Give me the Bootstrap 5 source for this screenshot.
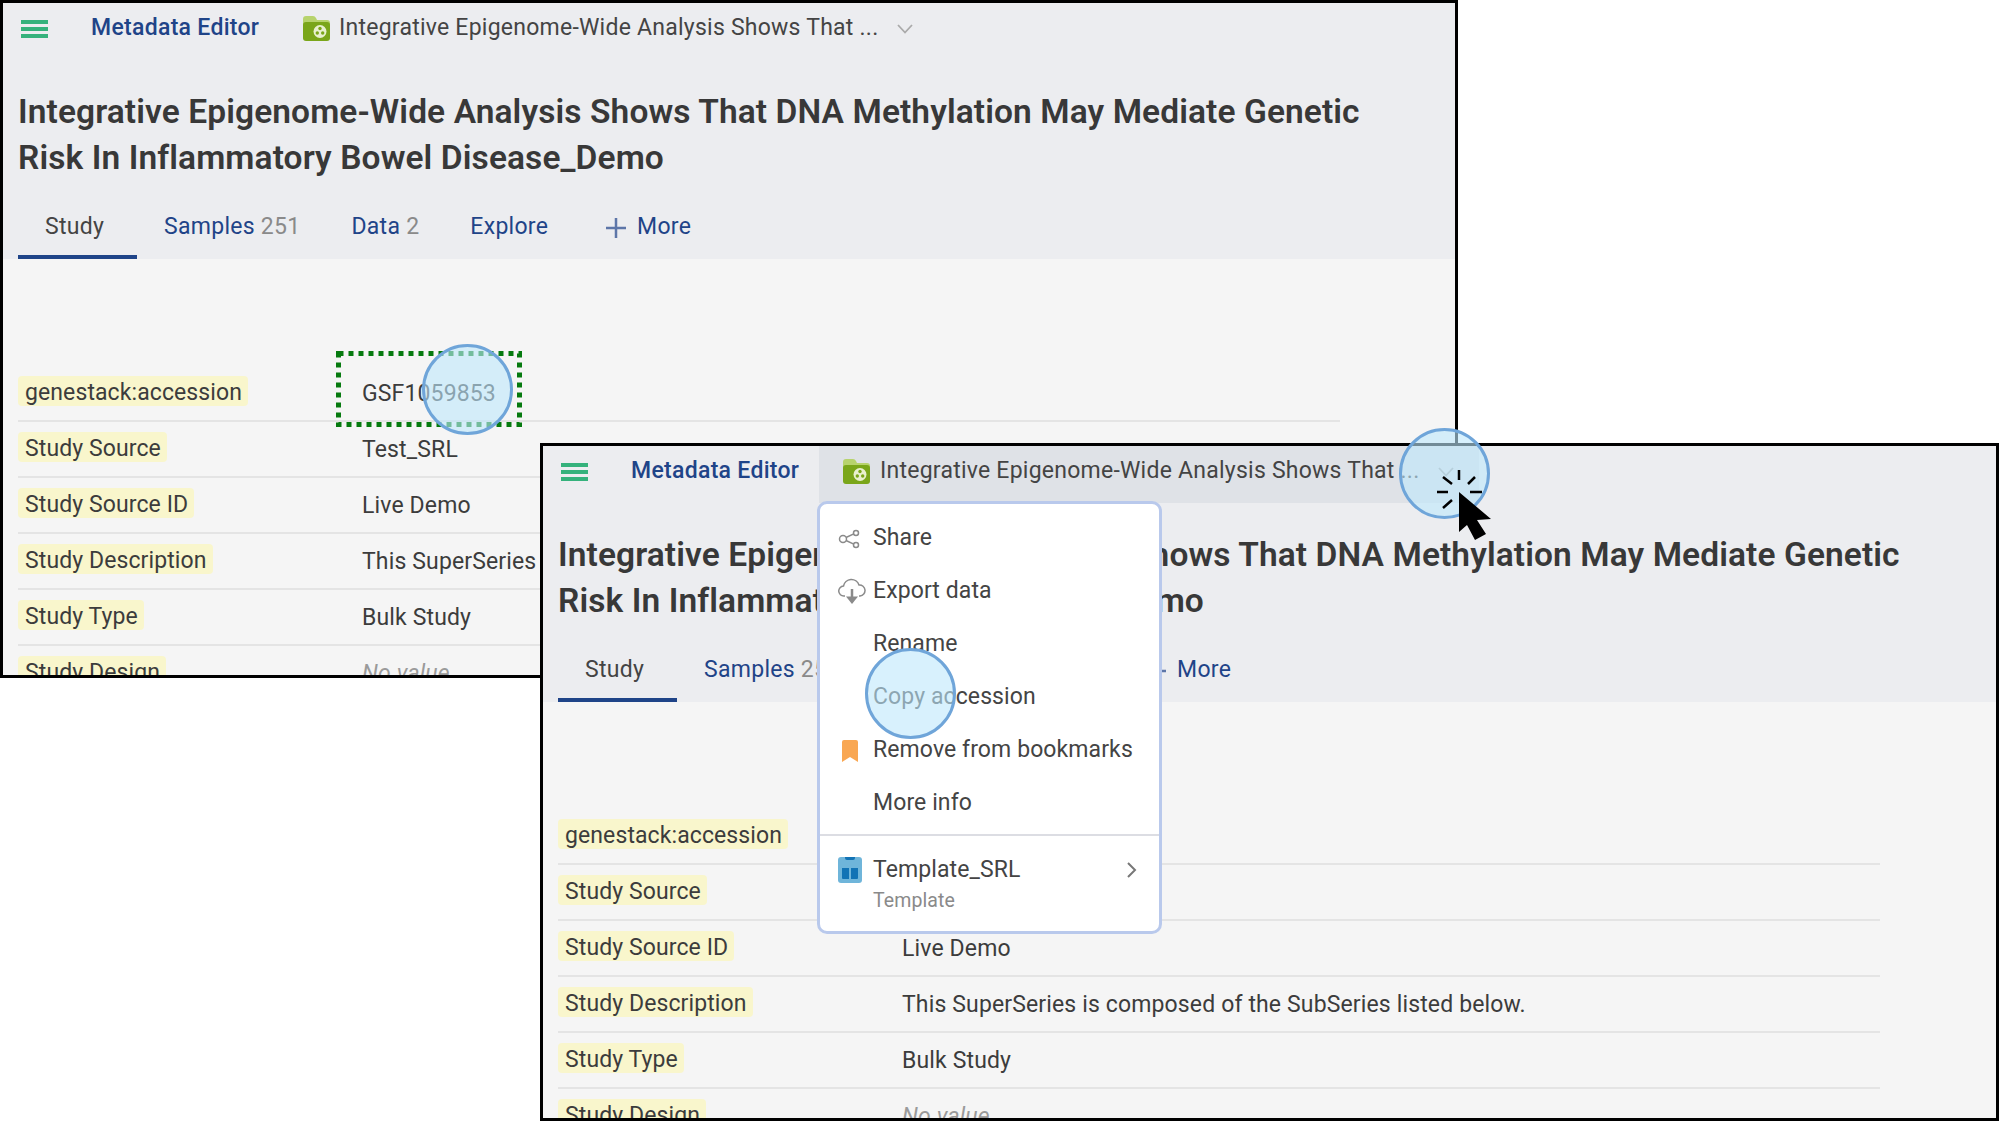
<!DOCTYPE html>
<html lang="en">
<head>
    <meta charset="UTF-8">
    <title>Metadata Editor</title>
    <link href="https://cdn.jsdelivr.net/npm/bootstrap@5.3.0/dist/css/bootstrap.min.css" rel="stylesheet">
    <style>
        body { background: #fff; font-family: "Roboto", "Liberation Sans", sans-serif; font-size: 23px; color: #3c3c3c; overflow: hidden; }
        .canvas { position: relative; width: 1999px; height: 1121px; overflow: hidden; }

        .app-win { position: absolute; width: 1458px; height: 678px; background: #f5f5f5; border: 3px solid #000; overflow: hidden; }
        .win-back { left: 0; top: 0; }
        .win-front { left: 540px; top: 443px; width: 1459px; }
        .app-head { background: #ecedf0; height: 256px; }

        .top-bar { height: 57px; padding-bottom: 6px; }
        .menu-bars { width: 27px; margin-left: 18px; margin-right: 43px; }
        .menu-bars span { display: block; height: 4px; background: #35b27c; margin: 3px 0; }
        .app-name { color: #1f4488; font-weight: 500; width: 188px; letter-spacing: .3px; }
        .crumb { width: 660px; height: 57px; margin-bottom: -6px; padding: 0 0 6px 24px; color: #444; letter-spacing: .24px; }
        .crumb-open { background: #dfe2e7; }
        .crumb svg.folder { margin-right: 9px; flex: none; }
        .crumb-open svg.folder { margin-right: 10px; }
        .crumb svg.chev { margin-left: 19px; flex: none; }

        .doc-title { font-size: 33.500px; line-height: 46px; font-weight: 600; color: #383838; margin: 0; padding: 29px 80px 0 15px; height: 122px; letter-spacing: .1px; }

        .study-tabs { padding-left: 15px; }
        .study-tabs .nav-link { color: #1f4488; font-size: 23px; height: 77px; padding: 28px 24px 0 27px; border-bottom: 3px solid transparent; letter-spacing: .27px; white-space: nowrap; }
        .study-tabs .nav-link.active { color: #444; padding-right: 33px; border-bottom: 4px solid #1f4488; }
        .study-tabs .nav-item:nth-child(4) .nav-link { padding-right: 31px; }
        .tab-count { color: #8a8a8a; }
        .plus-icon { margin-right: 5px; }

        .meta-list { padding: 107px 0 0 15px; width: 1337px; }
        .meta-row { height: 56px; border-bottom: 2px solid #e4e4e4; align-items: center; }
        .meta-key { width: 344px; flex: none; }
        .key-chip { display: inline-block; background: #f9f6cc; border-radius: 4px; height: 30px; line-height: 33px; padding: 0 6px 0 7px; letter-spacing: .1px; }
        .meta-val { letter-spacing: .14px; padding-top: 2px; }
        .no-val { color: #9a9a9a; font-style: italic; }

        .action-menu { display: block; position: absolute; left: 274px; top: 55px; width: 345px; height: 433px; margin: 0; padding: 8px 0 0; background: #fff; border: 3px solid #b9c9ec; border-radius: 10px; font-size: 23px; color: #444; letter-spacing: .1px; z-index: 5; }
        .action-menu .dropdown-item { height: 53px; padding: 0 18px; color: #444; font-size: 23px; }
        .item-icon { width: 35px; flex: none; }
        .action-menu .dropdown-divider { margin: 4px 0 0; border-top: 2px solid #dcdde3; opacity: 1; }
        .template-item { padding: 17px 18px 0; }
        .template-sub { color: #8a8a8a; font-size: 19.500px; padding-left: 35px; line-height: 30px; margin-top: -2px; }

        .check-box { position: absolute; left: 336px; top: 351px; }
        .tap-spot { position: absolute; width: 91px; height: 91px; border-radius: 50%; background: rgba(190, 232, 252, .6); border: 3px solid #6fa5d9; z-index: 10; }
        .click-mark { position: absolute; left: 1430px; top: 465px; z-index: 11; }
    </style>
</head>
<body>
<svg width="0" height="0" class="position-absolute">
    <symbol id="folder" viewBox="0 0 27 25">
        <path d="M0 3q0-3 3-3h7q2 0 3 2l1 2h10q3 0 3 3v3H0z" fill="#b7d36d"/>
        <rect x="0" y="6" width="27" height="19" rx="3" fill="#7aa61a"/>
        <circle cx="17" cy="15.500" r="6.500" fill="#e8f0cf"/>
        <circle cx="17" cy="12.500" r="1.700" fill="#7aa61a"/>
        <circle cx="14.300" cy="17" r="1.700" fill="#7aa61a"/>
        <circle cx="19.700" cy="17" r="1.700" fill="#7aa61a"/>
    </symbol>
    <symbol id="chevron" viewBox="0 0 16 10">
        <path d="M1 1l7 7.500L15 1" fill="none" stroke="#aaa" stroke-width="1.800"/>
    </symbol>
</svg>

<div class="canvas">
    <!-- back window -->
    <div class="app-win win-back">
        <div class="app-head">
            <div class="top-bar d-flex align-items-center">
                <div class="menu-bars"><span></span><span></span><span></span></div>
                <div class="app-name">Metadata Editor</div>
                <div class="crumb d-flex align-items-center">
                    <svg class="folder" width="27" height="25"><use href="#folder"/></svg>
                    Integrative Epigenome-Wide Analysis Shows That ...
                    <svg class="chev" width="16" height="10"><use href="#chevron"/></svg>
                </div>
            </div>
            <h1 class="doc-title">Integrative Epigenome-Wide Analysis Shows That DNA Methylation May Mediate Genetic Risk In Inflammatory Bowel Disease_Demo</h1>
            <ul class="nav study-tabs">
                <li class="nav-item"><a class="nav-link active" href="#">Study</a></li>
                <li class="nav-item"><a class="nav-link" href="#">Samples <span class="tab-count">251</span></a></li>
                <li class="nav-item"><a class="nav-link" href="#">Data <span class="tab-count">2</span></a></li>
                <li class="nav-item"><a class="nav-link" href="#">Explore</a></li>
                <li class="nav-item"><a class="nav-link" href="#"><svg width="20" height="20" class="plus-icon" viewBox="0 0 20 20"><path d="M10 0v20M0 10h20" stroke="#5d76a8" stroke-width="2.500"/></svg> More</a></li>
            </ul>
        </div>
        <div class="meta-list">
            <div class="meta-row d-flex"><div class="meta-key"><span class="key-chip">genestack:accession</span></div><div class="meta-val">GSF1059853</div></div>
            <div class="meta-row d-flex"><div class="meta-key"><span class="key-chip">Study Source</span></div><div class="meta-val">Test_SRL</div></div>
            <div class="meta-row d-flex"><div class="meta-key"><span class="key-chip">Study Source ID</span></div><div class="meta-val">Live Demo</div></div>
            <div class="meta-row d-flex"><div class="meta-key"><span class="key-chip">Study Description</span></div><div class="meta-val">This SuperSeries is composed of the SubSeries listed below.</div></div>
            <div class="meta-row d-flex"><div class="meta-key"><span class="key-chip">Study Type</span></div><div class="meta-val">Bulk Study</div></div>
            <div class="meta-row d-flex"><div class="meta-key"><span class="key-chip">Study Design</span></div><div class="meta-val no-val">No value</div></div>
        </div>
    </div>

    <svg class="check-box" width="186" height="76" viewBox="0 0 186 76"><rect x="2.500" y="2.500" width="181" height="71" fill="none" stroke="#067a0f" stroke-width="5" stroke-dasharray="5 5"/></svg>
    <div class="tap-spot" style="left:422px;top:344px"></div>

    <!-- front window -->
    <div class="app-win win-front">
        <div class="app-head">
            <div class="top-bar d-flex align-items-center">
                <div class="menu-bars"><span></span><span></span><span></span></div>
                <div class="app-name">Metadata Editor</div>
                <div class="crumb crumb-open d-flex align-items-center">
                    <svg class="folder" width="27" height="25"><use href="#folder"/></svg>
                    Integrative Epigenome-Wide Analysis Shows That ...
                    <svg class="chev" width="16" height="10"><use href="#chevron"/></svg>
                </div>
            </div>
            <h1 class="doc-title">Integrative Epigenome-Wide Analysis Shows That DNA Methylation May Mediate Genetic Risk In Inflammatory Bowel Disease_Demo</h1>
            <ul class="nav study-tabs">
                <li class="nav-item"><a class="nav-link active" href="#">Study</a></li>
                <li class="nav-item"><a class="nav-link" href="#">Samples <span class="tab-count">251</span></a></li>
                <li class="nav-item"><a class="nav-link" href="#">Data <span class="tab-count">2</span></a></li>
                <li class="nav-item"><a class="nav-link" href="#">Explore</a></li>
                <li class="nav-item"><a class="nav-link" href="#"><svg width="20" height="20" class="plus-icon" viewBox="0 0 20 20"><path d="M10 0v20M0 10h20" stroke="#5d76a8" stroke-width="2.500"/></svg> More</a></li>
            </ul>
        </div>
        <div class="meta-list">
            <div class="meta-row d-flex"><div class="meta-key"><span class="key-chip">genestack:accession</span></div><div class="meta-val">GSF1059853</div></div>
            <div class="meta-row d-flex"><div class="meta-key"><span class="key-chip">Study Source</span></div><div class="meta-val">Test_SRL</div></div>
            <div class="meta-row d-flex"><div class="meta-key"><span class="key-chip">Study Source ID</span></div><div class="meta-val">Live Demo</div></div>
            <div class="meta-row d-flex"><div class="meta-key"><span class="key-chip">Study Description</span></div><div class="meta-val">This SuperSeries is composed of the SubSeries listed below.</div></div>
            <div class="meta-row d-flex"><div class="meta-key"><span class="key-chip">Study Type</span></div><div class="meta-val">Bulk Study</div></div>
            <div class="meta-row d-flex"><div class="meta-key"><span class="key-chip">Study Design</span></div><div class="meta-val no-val">No value</div></div>
        </div>

        <!-- menu opened from the breadcrumb -->
        <div class="dropdown-menu action-menu">
            <a class="dropdown-item d-flex align-items-center" href="#">
                <span class="item-icon"><svg width="22" height="20" viewBox="0 0 22 20" class="d-block"><g fill="none" stroke="#8a8a8a" stroke-width="1.500"><circle cx="5" cy="10" r="3.500"/><circle cx="18" cy="4" r="2.500"/><circle cx="18" cy="16" r="2.500"/><path d="M8 8.500l7.800-3.600M8 11.500l7.800 3.600"/></g></svg></span>Share
            </a>
            <a class="dropdown-item d-flex align-items-center" href="#">
                <span class="item-icon"><svg width="28" height="27" viewBox="0 0 28 27" class="d-block"><path d="M7 18H6a5 5 0 0 1-.5-10A8 8 0 0 1 21 7a5.500 5.500 0 0 1 1 11h-1" fill="none" stroke="#8a8a8a" stroke-width="1.500"/><path d="M14 11v10" stroke="#8a8a8a" stroke-width="2.500"/><path d="M8 18.500h12L14 26z" fill="#8a8a8a"/></svg></span>Export data
            </a>
            <a class="dropdown-item d-flex align-items-center" href="#"><span class="item-icon"></span>Rename</a>
            <a class="dropdown-item d-flex align-items-center" href="#"><span class="item-icon"></span>Copy accession</a>
            <a class="dropdown-item d-flex align-items-center" href="#">
                <span class="item-icon"><svg width="16" height="22" viewBox="0 0 16 22" class="d-block ms-1"><path d="M2 0h12q2 0 2 2v20l-8-5-8 5V2q0-2 2-2z" fill="#f9a752"/></svg></span>Remove from bookmarks
            </a>
            <a class="dropdown-item d-flex align-items-center" href="#"><span class="item-icon"></span>More info</a>
            <div class="dropdown-divider"></div>
            <div class="template-item">
                <div class="d-flex align-items-center">
                    <span class="item-icon"><svg width="24" height="26" viewBox="0 0 24 26" class="d-block"><rect width="24" height="26" rx="3" fill="#6fb5da"/><path d="M7 0h10v1q0 2-2 2H9Q7 3 7 1zM4 11h7v11H5q-1 0-1-1zM13 11h7v10q0 1-1 1h-6z" fill="#1273b5"/></svg></span>
                    <span class="flex-grow-1">Template_SRL</span>
                    <svg width="10" height="16" viewBox="0 0 10 16" class="me-1"><path d="M1 1l7 7-7 7" fill="none" stroke="#777" stroke-width="2"/></svg>
                </div>
                <div class="template-sub">Template</div>
            </div>
        </div>
    </div>

    <div class="tap-spot" style="left:865px;top:648px"></div>
    <div class="tap-spot" style="left:1399px;top:428px"></div>
    <svg class="click-mark" width="64" height="80" viewBox="-29 -27 64 80">
        <path d="M0-22V-12M16-15L9-8M-16-15L-7-8M11 0H23M-22 0H-11M-16 16L-7 8" stroke="#000" stroke-width="2.500" fill="none"/>
        <path d="M0 0V40L8 33L16 48L27 42L18 28L32 27z" fill="#000"/>
    </svg>
</div>

<script src="https://cdn.jsdelivr.net/npm/bootstrap@5.3.0/dist/js/bootstrap.bundle.min.js"></script>
</body>
</html>
